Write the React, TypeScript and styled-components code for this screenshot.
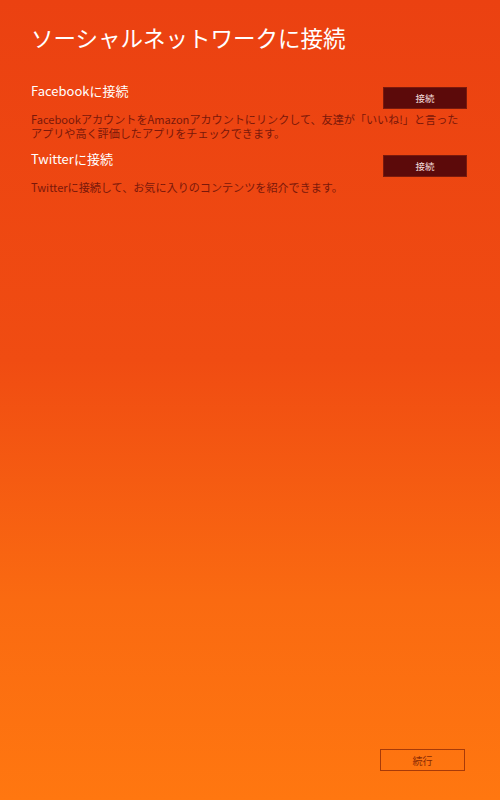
import React from 'react';
import styled, { createGlobalStyle } from 'styled-components';

type Network = {
  name: string,
  lines: string[],
}

const networks: Network[] = [
  {
    name: 'Facebook',
    lines: [
      'FacebookアカウントをAmazonアカウントにリンクして、友達が「いいね!」と言った',
      'アプリや高く評価したアプリをチェックできます。',
    ],
  },
  {
    name: 'Twitter',
    lines: ['Twitterに接続して、お気に入りのコンテンツを紹介できます。'],
  },
];

export default function App(): React.FunctionComponentElement<JSX.Element> {
  return (
    <>
      <GlobalStyle />
      <Page>
        <Title>{'ソーシャルネットワークに接続'}</Title>

        <List>
          {networks.map(n => (
            <Section key={n.name}>
              <Row>
                <Heading>{n.name}{'に接続'}</Heading>
                <Connect type='button'>{'接続'}</Connect>
              </Row>
              <Description>
                {n.lines.map((l, i) => (
                  <Line key={i}>{l}</Line>
                ))}
              </Description>
            </Section>
          ))}
        </List>

        <Footer>
          <Continue type='button'>{'続行'}</Continue>
        </Footer>
      </Page>
    </>
  )
}

// STYLES
const GlobalStyle = createGlobalStyle`
  * {
    box-sizing: border-box;
  }

  body {
    margin: 0;
    font-family: "Noto Sans CJK JP", "Noto Sans", sans-serif;
  }
`

const Page = styled.div`
  background: linear-gradient(180deg, #eb4111 0%, #f04c12 45%, #fa6a11 75%, #ff7710 100%);
  display: flex;
  flex-direction: column;
  padding: 22px 33px 29px 31px;

  height: 800px;
  width: 500px;
`

const Title = styled.h1`
  color: #fff;
  font-size: 22.5px;
  font-weight: 400;
  line-height: 30px;
  margin: 0 0 30px;
`

const List = styled.div`
  display: flex;
  flex-direction: column;
  gap: 10px;
`

const Section = styled.div`
  display: flex;
  flex-direction: column;
  gap: 3px;
`

const Row = styled.div`
  display: flex;
  align-items: flex-start;
  justify-content: space-between;
`

const Heading = styled.h2`
  color: #fff;
  font-size: 13px;
  font-weight: 400;
  line-height: 18px;
  margin: 0;
`

const Connect = styled.button`
  background: #5c0a0a;
  border: 1px solid #7a1a0c;
  color: #f4dede;
  font-family: inherit;
  font-size: 9.5px;
  margin-top: 5px;
  padding: 0;

  height: 22px;
  width: 84px;
`

const Description = styled.div`
  display: flex;
  flex-direction: column;
  color: #7a180a;
  font-size: 11.1px;
`

const Line = styled.p`
  line-height: 14px;
  margin: 0;
  white-space: nowrap;
`

const Footer = styled.div`
  display: flex;
  justify-content: flex-end;
  margin-top: auto;
  padding-right: 2px;
`

const Continue = styled.button`
  background: none;
  border: 1px solid #a83a08;
  color: #8a2a05;
  font-family: inherit;
  font-size: 10px;
  padding: 0;

  height: 22px;
  width: 85px;
`
